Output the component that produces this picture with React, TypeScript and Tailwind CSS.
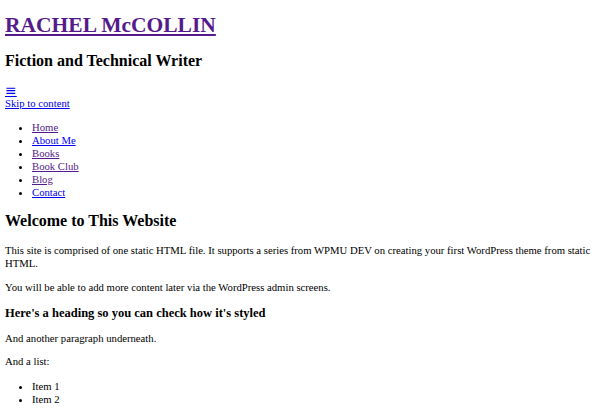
import React from "react";

const visited = "text-[#551a8b] underline";
const link = "text-[#0000ee] underline";

export default function App() {
  const nav: { label: string; v: boolean }[] = [
    { label: "Home", v: true },
    { label: "About Me", v: false },
    { label: "Books", v: true },
    { label: "Book Club", v: true },
    { label: "Blog", v: true },
    { label: "Contact", v: false },
  ];
  return (
    <div
      className="w-[600px] h-[408px] overflow-hidden bg-white text-black pl-[5px] pr-[5px] flow-root"
      style={{ fontFamily: '"Liberation Serif", "Times New Roman", serif' }}
    >
      <h1 className="mt-[13px] text-[21.5px] leading-[24px] font-bold">
        <a href="#" className={visited}>RACHEL McCOLLIN</a>
      </h1>
      <h2 className="mt-[14px] text-[16px] leading-[20px] font-bold">Fiction and Technical Writer</h2>
      <div className="mt-[13px] text-[10.7px] leading-[13px]">
        <div className="h-[13px]">
          <a
            href="#"
            className={link + " text-[14px] leading-[13px]"}
            style={{ fontFamily: '"DejaVu Serif", serif' }}
          >
            ≡
          </a>
        </div>
        <div>
          <a href="#" className={link}>Skip to content</a>
        </div>
      </div>
      <ul className="mt-[11px] list-disc pl-[27px] text-[10.7px] leading-[13px]">
        {nav.map((n) => (
          <li key={n.label}>
            <a href="#" className={n.v ? visited : link}>{n.label}</a>
          </li>
        ))}
      </ul>
      <h2 className="mt-[12px] text-[16px] leading-[20px] font-bold">Welcome to This Website</h2>
      <p className="mt-[13px] text-[10.7px] leading-[13px]">
        This site is comprised of one static HTML file. It supports a series from WPMU DEV on creating your first WordPress theme from static HTML.
      </p>
      <p className="mt-[11px] text-[10.7px] leading-[13px]">
        You will be able to add more content later via the WordPress admin screens.
      </p>
      <h3 className="mt-[12px] text-[12.5px] leading-[15px] font-bold">Here's a heading so you can check how it's styled</h3>
      <p className="mt-[11px] text-[10.7px] leading-[13px]">And another paragraph underneath.</p>
      <p className="mt-[10px] text-[10.7px] leading-[13px]">And a list:</p>
      <ul className="mt-[12px] list-disc pl-[27px] text-[10.7px] leading-[13px]">
        <li>Item 1</li>
        <li>Item 2</li>
      </ul>
    </div>
  );
}
